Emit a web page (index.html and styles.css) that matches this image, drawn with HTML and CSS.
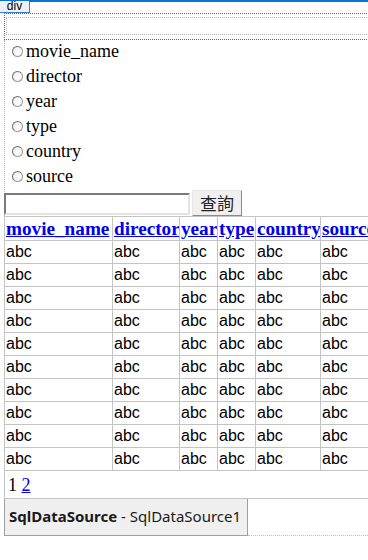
FILE: index.html
```html
<!DOCTYPE html>
<html lang="zh-Hant">
<head>
  <meta charset="UTF-8">
  <title>Movie Search</title>
  <link rel="stylesheet" href="styles.css">
</head>
<body>
  <div class="topbar"></div>
  <div class="tag">div</div>
  <div class="divbox">
    <div class="inner"></div>
  </div>

  <div class="form">
    <div class="radios">
      <div class="radio"><span class="dot"></span>movie_name</div>
      <div class="radio"><span class="dot"></span>director</div>
      <div class="radio"><span class="dot"></span>year</div>
      <div class="radio"><span class="dot"></span>type</div>
      <div class="radio"><span class="dot"></span>country</div>
      <div class="radio"><span class="dot"></span>source</div>
    </div>
    <div class="search">
      <input type="text" class="box">
      <button class="btn">查詢</button>
    </div>
  </div>

  <table class="grid">
    <colgroup>
      <col style="width:108px">
      <col style="width:67px">
      <col style="width:38px">
      <col style="width:38px">
      <col style="width:65px">
      <col style="width:60px">
    </colgroup>
    <tr class="head">
      <th><a href="#">movie_name</a></th>
      <th><a href="#">director</a></th>
      <th><a href="#">year</a></th>
      <th><a href="#">type</a></th>
      <th><a href="#">country</a></th>
      <th><a href="#">source</a></th>
    </tr>
    <tr><td>abc</td><td>abc</td><td>abc</td><td>abc</td><td>abc</td><td>abc</td></tr>
    <tr><td>abc</td><td>abc</td><td>abc</td><td>abc</td><td>abc</td><td>abc</td></tr>
    <tr><td>abc</td><td>abc</td><td>abc</td><td>abc</td><td>abc</td><td>abc</td></tr>
    <tr><td>abc</td><td>abc</td><td>abc</td><td>abc</td><td>abc</td><td>abc</td></tr>
    <tr><td>abc</td><td>abc</td><td>abc</td><td>abc</td><td>abc</td><td>abc</td></tr>
    <tr><td>abc</td><td>abc</td><td>abc</td><td>abc</td><td>abc</td><td>abc</td></tr>
    <tr><td>abc</td><td>abc</td><td>abc</td><td>abc</td><td>abc</td><td>abc</td></tr>
    <tr><td>abc</td><td>abc</td><td>abc</td><td>abc</td><td>abc</td><td>abc</td></tr>
    <tr><td>abc</td><td>abc</td><td>abc</td><td>abc</td><td>abc</td><td>abc</td></tr>
    <tr><td>abc</td><td>abc</td><td>abc</td><td>abc</td><td>abc</td><td>abc</td></tr>
    <tr class="pager"><td colspan="6">1 <a href="#">2</a></td></tr>
  </table>

  <div class="bottom">
    <div class="source"><b>SqlDataSource</b> - SqlDataSource1</div>
    <div class="rest"></div>
  </div>
</body>
</html>
```

FILE: styles.css
```css
html, body {
  overflow: hidden;
}

body {
  margin: 0;
  width: 368px;
  background: #fff;
  font-family: "Liberation Serif", serif;
}

.topbar {
  height: 2px;
  background: #0a74d0;
}

.tag {
  width: 29px;
  height: 11px;
  border-right: 1px solid #3a7bd5;
  border-bottom: 1px solid #3a7bd5;
  background: #eef0f4;
  font-family: "Liberation Sans", sans-serif;
  font-size: 12px;
  line-height: 11px;
  text-align: center;
  color: #000;
  margin-top: -1px;
}

.divbox {
  margin-left: 4px;
  height: 25px;
  width: 400px;
  border: 1px dotted #1e6fd0;
  border-right: none;
}

.inner {
  margin: 3px 0 0 1px;
  height: 16px;
  border: 1px dotted #b5b5b5;
  border-right: none;
}

.form {
  margin-left: 4px;
  border-left: 1px dotted #b0b0b0;
  padding-top: 1px;
}

.radio {
  height: 25px;
  line-height: 20px;
  font-size: 18px;
  display: flex;
  align-items: flex-start;
  color: #000;
}

.dot {
  width: 9px;
  height: 9px;
  margin: 5px 3px 0 7px;
  border: 1px solid #9a9a9a;
  border-top-color: #6e6e6e;
  border-left-color: #6e6e6e;
  border-radius: 50%;
  background: radial-gradient(circle at 60% 60%, #fff 0%, #f2f2f2 60%, #dcdcdc 100%);
}

.search {
  display: flex;
  align-items: flex-end;
  height: 26px;
  margin-top: -1px;
}

.box {
  box-sizing: border-box;
  width: 186px;
  height: 22px;
  margin: 0 2px 1px -1px;
  padding: 0;
  border: 2px solid;
  border-color: #7a7a7a #e3e3e3 #e3e3e3 #7a7a7a;
  background: #fff;
}

.btn {
  box-sizing: border-box;
  width: 50px;
  height: 26px;
  padding: 0;
  border: 1px solid;
  border-color: #e8e8e8 #8a8a8a #8a8a8a #e8e8e8;
  background: #f0f0f0;
  font-family: "Noto Sans CJK TC", sans-serif;
  font-size: 17px;
  line-height: 22px;
  color: #222;
}

.grid {
  margin-left: 4px;
  border-collapse: collapse;
  table-layout: fixed;
  width: 376px;
}

.grid th,
.grid td {
  border: 1px solid #c4c4c4;
  padding: 0 1px;
  text-align: left;
  white-space: nowrap;
  overflow: hidden;
}

.head th {
  height: 23px;
  font-size: 19.2px;
  font-weight: bold;
  line-height: 20px;
}

.head a {
  color: #0000ee;
}

.grid td {
  height: 22px;
  font-family: "Liberation Sans", sans-serif;
  font-size: 16px;
  line-height: 20px;
  color: #000;
}

.grid .pager td {
  height: 27px;
  padding-left: 3px;
  font-family: "Liberation Serif", serif;
  font-size: 18px;
  border-right: none;
}

.pager a {
  color: #0000ee;
}

.bottom {
  display: flex;
  margin-left: 4px;
}

.source {
  width: 238px;
  height: 36px;
  padding-left: 4px;
  background: #f0f0f0;
  border: 1px solid #a0a0a0;
  border-top: none;
  font-family: "Noto Sans", sans-serif;
  font-size: 15px;
  line-height: 34px;
  color: #1a1a1a;
  white-space: nowrap;
}

.rest {
  flex: 1;
  height: 36px;
  border-bottom: 1px dotted #c0c0c0;
}
```
